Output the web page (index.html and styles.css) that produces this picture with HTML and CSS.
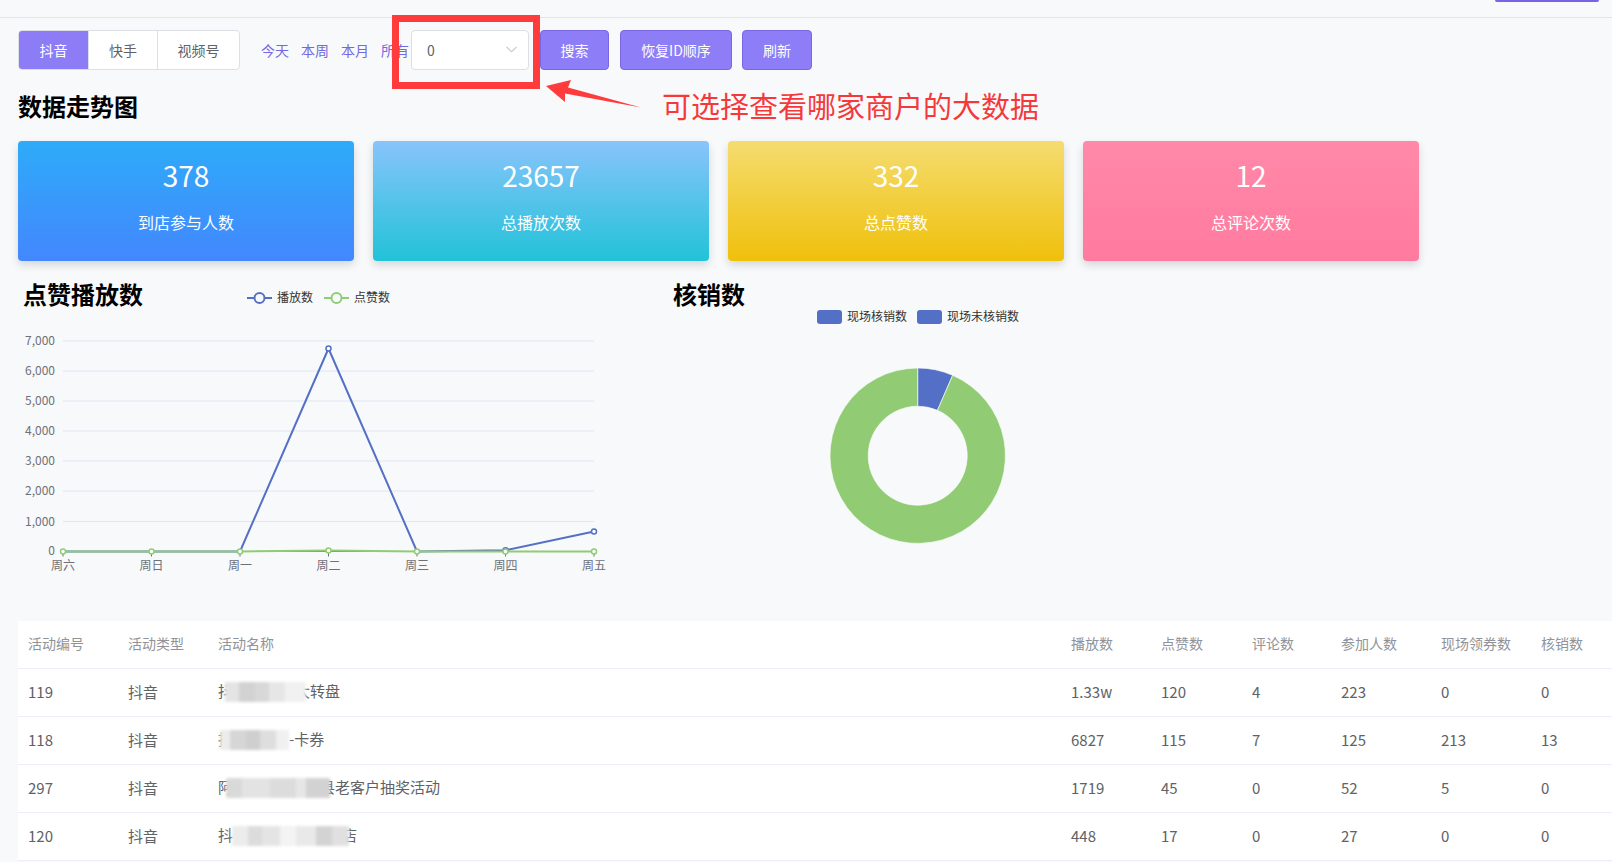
FILE: index.html
```html
<!DOCTYPE html>
<html lang="zh-CN">
<head>
<meta charset="utf-8">
<title>数据走势图</title>
<link rel="stylesheet" href="styles.css">
</head>
<body>
<div class="topbar"><div class="topbtn"></div></div>

<div class="toolbar">
  <div class="tabs">
    <span class="tab tab-1 active">抖音</span>
    <span class="tab tab-2">快手</span>
    <span class="tab tab-3">视频号</span>
  </div>
  <div class="ranges">
    <a class="range">今天</a>
    <a class="range">本周</a>
    <a class="range">本月</a>
    <a class="range">所有</a>
  </div>
  <div class="select">
    <span class="select-value">0</span>
    <svg class="chevron" width="11" height="7" viewBox="0 0 11 7"><path d="M0.5 0.8 L5.5 5.8 L10.5 0.8" fill="none" stroke="#c0c4cc" stroke-width="1.1"/></svg>
  </div>
  <button class="btn btn-search">搜索</button>
  <button class="btn btn-reset">恢复ID顺序</button>
  <button class="btn btn-refresh">刷新</button>
</div>

<div class="annot-box"></div>
<svg class="annot-arrow" width="110" height="40" viewBox="540 75 110 40">
  <polygon points="546,86 571,80 568,87.5 641,107.5 565,93.5 565,102" fill="#ff3b3b"/>
</svg>
<div class="annot-text">可选择查看哪家商户的大数据</div>

<h2 class="section-title">数据走势图</h2>

<div class="cards">
  <div class="card card-blue"><div class="card-num">378</div><div class="card-label">到店参与人数</div></div>
  <div class="card card-cyan"><div class="card-num">23657</div><div class="card-label">总播放次数</div></div>
  <div class="card card-yellow"><div class="card-num">332</div><div class="card-label">总点赞数</div></div>
  <div class="card card-pink"><div class="card-num">12</div><div class="card-label">总评论次数</div></div>
</div>

<div class="charts">
  <svg class="chart chart-line" width="640" height="330" viewBox="0 0 640 330">
    <text class="chart-title" x="23" y="34">点赞播放数</text>
    <line x1="247" y1="28" x2="272" y2="28" stroke="#5470c6" stroke-width="2"/>
    <circle cx="259.5" cy="28" r="5" fill="#f8f9fb" stroke="#5470c6" stroke-width="2"/>
    <text class="legend" x="277" y="32">播放数</text>
    <line x1="324" y1="28" x2="349" y2="28" stroke="#91cc75" stroke-width="2"/>
    <circle cx="336.5" cy="28" r="5" fill="#f8f9fb" stroke="#91cc75" stroke-width="2"/>
    <text class="legend" x="354" y="32">点赞数</text>

    <g stroke="#e0e6f1" stroke-width="1">
      <line x1="63" y1="71" x2="594" y2="71"/>
      <line x1="63" y1="101" x2="594" y2="101"/>
      <line x1="63" y1="131" x2="594" y2="131"/>
      <line x1="63" y1="161" x2="594" y2="161"/>
      <line x1="63" y1="191" x2="594" y2="191"/>
      <line x1="63" y1="221" x2="594" y2="221"/>
      <line x1="63" y1="251.5" x2="594" y2="251.5"/>
    </g>
    <line x1="63" y1="281.5" x2="594" y2="281.5" stroke="#6e7079" stroke-width="1"/>
    <g stroke="#6e7079" stroke-width="1">
      <line x1="63" y1="281.5" x2="63" y2="286.5"/>
      <line x1="151.5" y1="281.5" x2="151.5" y2="286.5"/>
      <line x1="240" y1="281.5" x2="240" y2="286.5"/>
      <line x1="328.5" y1="281.5" x2="328.5" y2="286.5"/>
      <line x1="417" y1="281.5" x2="417" y2="286.5"/>
      <line x1="505.5" y1="281.5" x2="505.5" y2="286.5"/>
      <line x1="594" y1="281.5" x2="594" y2="286.5"/>
    </g>
    <g class="axis-y">
      <text x="55" y="75">7,000</text>
      <text x="55" y="105">6,000</text>
      <text x="55" y="135">5,000</text>
      <text x="55" y="165">4,000</text>
      <text x="55" y="195">3,000</text>
      <text x="55" y="225">2,000</text>
      <text x="55" y="255.5">1,000</text>
      <text x="55" y="284.5">0</text>
    </g>
    <g class="axis-x">
      <text x="63" y="300">周六</text>
      <text x="151.5" y="300">周日</text>
      <text x="240" y="300">周一</text>
      <text x="328.5" y="300">周二</text>
      <text x="417" y="300">周三</text>
      <text x="505.5" y="300">周四</text>
      <text x="594" y="300">周五</text>
    </g>
    <polyline points="63,281.5 151.5,281.5 240,281.5 328.5,78.5 417,281.5 505.5,280.3 594,261.5" fill="none" stroke="#5470c6" stroke-width="2" stroke-linejoin="round"/>
    <g fill="#fff" stroke="#5470c6" stroke-width="1.5">
      <circle cx="328.5" cy="78.5" r="2.5"/>
      <circle cx="505.5" cy="280.3" r="2.5"/>
      <circle cx="594" cy="261.5" r="2.5"/>
    </g>
    <polyline points="63,281.5 151.5,281.5 240,281.5 328.5,280.6 417,281.5 505.5,281.5 594,281.5" fill="none" stroke="#91cc75" stroke-width="2" stroke-linejoin="round"/>
    <g fill="#fff" stroke="#91cc75" stroke-width="1.5">
      <circle cx="63" cy="281.5" r="2.5"/>
      <circle cx="151.5" cy="281.5" r="2.5"/>
      <circle cx="240" cy="281.5" r="2.5"/>
      <circle cx="328.5" cy="280.6" r="2.5"/>
      <circle cx="417" cy="281.5" r="2.5"/>
      <circle cx="505.5" cy="281.5" r="2.5"/>
      <circle cx="594" cy="281.5" r="2.5"/>
    </g>
  </svg>

  <svg class="chart chart-pie" width="420" height="330" viewBox="0 0 420 330">
    <text class="chart-title" x="33" y="34">核销数</text>
    <rect x="177" y="40" width="25" height="14" rx="3" fill="#5470c6"/>
    <text class="legend" x="207" y="51">现场核销数</text>
    <rect x="277" y="40" width="25" height="14" rx="3" fill="#5470c6"/>
    <text class="legend" x="307" y="51">现场未核销数</text>
    <path d="M277.7 98 A87.7 87.7 0 0 1 312.67 105.27 L297.44 140.3 A49.5 49.5 0 0 0 277.7 136.2 Z" fill="#5470c6" stroke="#fff" stroke-width="0.6"/>
    <path d="M312.67 105.27 A87.7 87.7 0 1 1 277.7 98 L277.7 136.2 A49.5 49.5 0 1 0 297.44 140.3 Z" fill="#91cc75" stroke="#fff" stroke-width="0.6"/>
  </svg>
</div>

<div class="table-wrap">
  <table class="data-table">
    <colgroup>
      <col class="c-id"><col class="c-type"><col class="c-name"><col class="c-play"><col class="c-like"><col class="c-comment"><col class="c-join"><col class="c-coupon"><col class="c-verify">
    </colgroup>
    <thead>
      <tr><th>活动编号</th><th>活动类型</th><th>活动名称</th><th>播放数</th><th>点赞数</th><th>评论数</th><th>参加人数</th><th>现场领券数</th><th>核销数</th></tr>
    </thead>
    <tbody>
      <tr>
        <td>119</td><td>抖音</td>
        <td>抖<span class="mosaic mosaic-1"></span>大转盘</td>
        <td>1.33w</td><td>120</td><td>4</td><td>223</td><td>0</td><td>0</td>
      </tr>
      <tr>
        <td>118</td><td>抖音</td>
        <td>抖<span class="mosaic mosaic-2"></span>-卡券</td>
        <td>6827</td><td>115</td><td>7</td><td>125</td><td>213</td><td>13</td>
      </tr>
      <tr>
        <td>297</td><td>抖音</td>
        <td>阿<span class="mosaic mosaic-3"></span>县老客户抽奖活动</td>
        <td>1719</td><td>45</td><td>0</td><td>52</td><td>5</td><td>0</td>
      </tr>
      <tr>
        <td>120</td><td>抖音</td>
        <td>抖<span class="mosaic mosaic-4"></span>店</td>
        <td>448</td><td>17</td><td>0</td><td>27</td><td>0</td><td>0</td>
      </tr>
    </tbody>
  </table>
</div>
</body>
</html>
```

FILE: styles.css
```css
* { box-sizing: border-box; }

html, body {
  margin: 0;
  padding: 0;
  background: #f8f9fb;
  overflow: hidden;
}

body {
  font-family: "Noto Sans CJK SC", "Microsoft YaHei", sans-serif;
  color: #606266;
  width: 1612px;
  height: 862px;
}

/* top bar */
.topbar {
  height: 18px;
  border-bottom: 1px solid #e3e5ea;
  display: flex;
  justify-content: flex-end;
  padding-right: 13px;
}
.topbtn {
  width: 104px;
  height: 2px;
  background: #7664e6;
  border-radius: 0 0 3px 3px;
}

/* toolbar */
.toolbar {
  display: flex;
  align-items: center;
  padding: 12px 0 0 18px;
  height: 52px;
}
.tabs {
  display: flex;
  height: 40px;
  border: 1px solid #dcdfe6;
  border-radius: 4px;
  overflow: hidden;
  background: #fff;
}
.tab {
  display: flex;
  align-items: center;
  justify-content: center;
  font-size: 14px;
  color: #606266;
  height: 100%;
  padding-bottom: 1px;
}
.tab-1 { width: 69px; }
.tab-2 { width: 69px; border-left: 1px solid #dcdfe6; }
.tab-3 { width: 82px; border-left: 1px solid #dcdfe6; }
.tab.active {
  background: #8c7cf5;
  color: #fff;
}
.ranges {
  display: flex;
  gap: 12px;
  margin-left: 21px;
}
.range {
  font-size: 14px;
  color: #7468e2;
  line-height: 20px;
}
.select {
  margin-left: 2px;
  width: 118px;
  height: 40px;
  border: 1px solid #dcdfe6;
  border-radius: 4px;
  background: #fff;
  display: flex;
  align-items: center;
  justify-content: space-between;
  padding: 0 11px 1px 15px;
  font-size: 14px;
  color: #606266;
}
.chevron { display: block; }
.btn {
  height: 40px;
  border: 1px solid #7767e3;
  border-radius: 4px;
  background: #8d7ef7;
  color: #fff;
  font-family: inherit;
  font-size: 14px;
  padding: 0 0 1px;
  cursor: pointer;
}
.btn-search { width: 69px; margin-left: 11px; }
.btn-reset { width: 112px; margin-left: 11px; }
.btn-refresh { width: 70px; margin-left: 10px; }

/* annotation overlays */
.annot-box {
  position: absolute;
  left: 392px;
  top: 15px;
  width: 148px;
  height: 74px;
  border: 7px solid #ff3b3b;
}
.annot-arrow {
  position: absolute;
  left: 540px;
  top: 75px;
}
.annot-text {
  position: absolute;
  left: 662px;
  top: 91px;
  font-size: 29px;
  line-height: 29px;
  color: #f5393b;
  white-space: nowrap;
}

/* section title */
.section-title {
  margin: 24px 0 0 18px;
  font-size: 24px;
  line-height: 24px;
  font-weight: bold;
  color: #000;
}

/* cards */
.cards {
  display: flex;
  gap: 19px;
  margin-top: 23px;
  padding-left: 18px;
}
.card {
  width: 336px;
  height: 120px;
  border-radius: 4px;
  box-shadow: 0 4px 8px rgba(0, 0, 0, 0.14);
  color: #fff;
  text-align: center;
  padding-top: 20px;
}
.card-num {
  font-size: 28px;
  line-height: 28px;
}
.card-label {
  margin-top: 25px;
  font-size: 16px;
  line-height: 16px;
}
.card-blue { background: linear-gradient(180deg, #2eabf9 0%, #4387fe 100%); }
.card-cyan { background: linear-gradient(180deg, #88c4fb 0%, #22c2d9 100%); }
.card-yellow { background: linear-gradient(180deg, #f5dc70 0%, #efc00b 100%); }
.card-pink { background: linear-gradient(180deg, #ff89a8 0%, #ff7a9f 100%); }

/* charts */
.charts {
  display: flex;
  margin-top: 9px;
  height: 330px;
}
.chart { display: block; }
.chart text { font-family: "Noto Sans CJK SC", "Microsoft YaHei", sans-serif; }
.chart-title {
  font-size: 24px;
  font-weight: bold;
  fill: #000;
}
.legend {
  font-size: 12px;
  fill: #333;
}
.axis-y text {
  font-size: 12px;
  fill: #6e7079;
  text-anchor: end;
}
.axis-x text {
  font-size: 12px;
  fill: #6e7079;
  text-anchor: middle;
}

/* table */
.table-wrap {
  margin-top: 21px;
  padding-left: 18px;
}
.data-table {
  width: 1594px;
  border-collapse: collapse;
  table-layout: fixed;
  background: #fff;
}
.c-id { width: 100px; }
.c-type { width: 90px; }
.c-name { width: 853px; }
.c-play { width: 90px; }
.c-like { width: 91px; }
.c-comment { width: 89px; }
.c-join { width: 100px; }
.c-coupon { width: 100px; }
.c-verify { width: 81px; }
.data-table th {
  height: 47px;
  padding: 0 0 2px 10px;
  text-align: left;
  font-weight: normal;
  font-size: 14px;
  color: #909399;
  border-bottom: 1px solid #ebeef5;
}
.data-table td {
  height: 48px;
  padding: 0 0 2px 10px;
  font-size: 15px;
  color: #606266;
  border-bottom: 1px solid #ebeef5;
  white-space: nowrap;
  overflow: hidden;
}
.mosaic {
  display: inline-block;
  position: relative;
  z-index: 1;
  height: 20px;
  vertical-align: middle;
  filter: blur(1.5px);
}
.mosaic-1 {
  width: 81px;
  margin: 0 -11px 0 -8px;
  background: linear-gradient(90deg, #e4e4e4 0 14px, #d2d2d2 14px 30px, #d8d8d8 30px 44px, #e6e6e6 44px 60px, #f1f1f1 60px 81px);
}
.mosaic-2 {
  width: 69px;
  margin: 0 0 0 -13px;
  background: linear-gradient(90deg, #ececec 0 10px, #d6d6d6 10px 26px, #cfcfcf 26px 40px, #dedede 40px 56px, #f0f0f0 56px 69px);
}
.mosaic-3 {
  width: 104px;
  margin: 0 -10px 0 -7px;
  background: linear-gradient(90deg, #d9d9d9 0 16px, #e3e3e3 16px 44px, #dcdcdc 44px 70px, #e6e6e6 70px 80px, #d2d2d2 80px 104px);
}
.mosaic-4 {
  width: 117px;
  margin: 0 -7px 0 -1px;
  background: linear-gradient(90deg, #ececec 0 16px, #dcdcdc 16px 30px, #e4e4e4 30px 48px, #f3f3f3 48px 64px, #e9e9e9 64px 84px, #d3d3d3 84px 100px, #e0e0e0 100px 117px);
}
```
